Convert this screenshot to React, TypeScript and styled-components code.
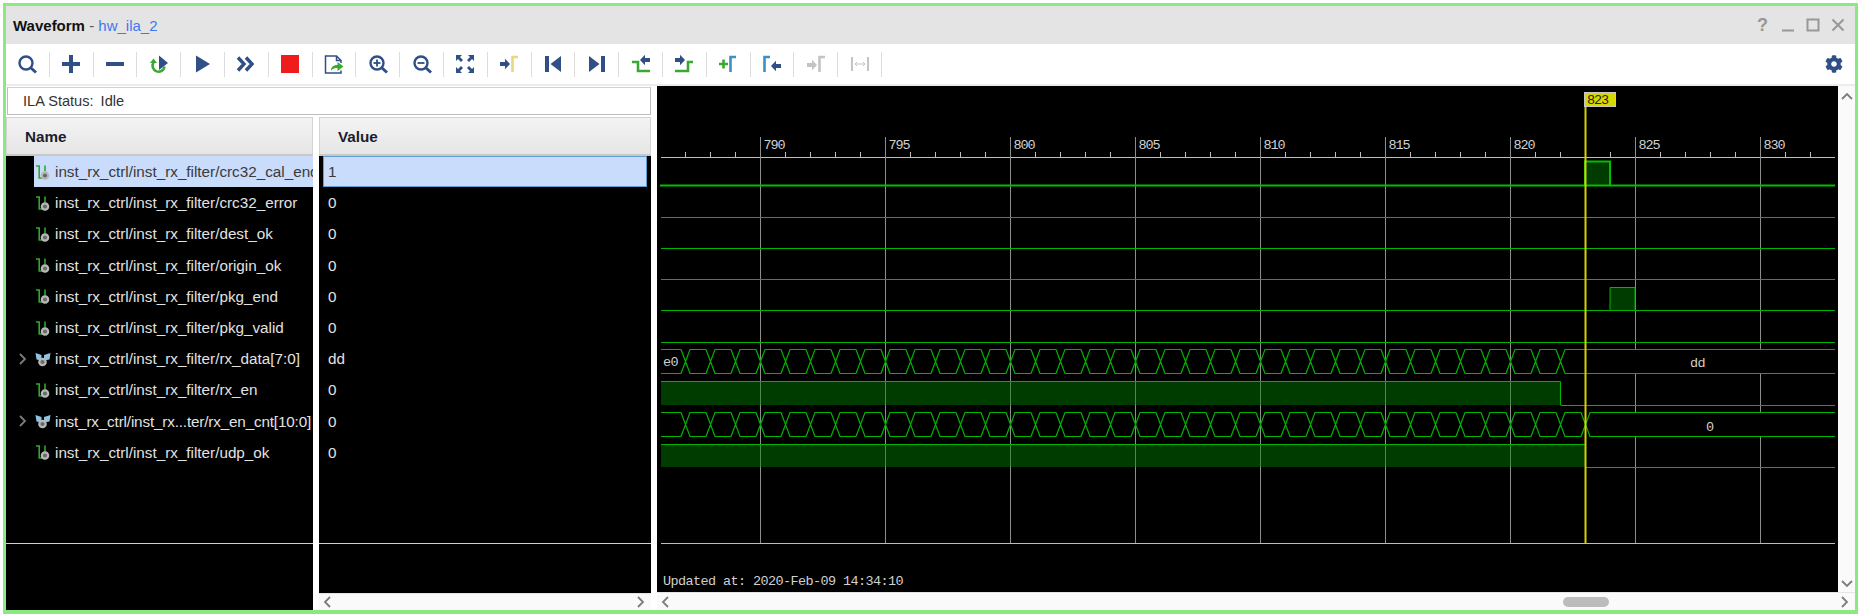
import React from "react";
import styled, { createGlobalStyle } from "styled-components";
import { FaCog } from "react-icons/fa";

const NAVY = "#2f4f86";
const GREEN = "#3aa835";
const GREY = "#c4c4c4";

const GlobalStyle = createGlobalStyle`
  html, body {
    margin: 0;
    padding: 0;
    background: #fff;
    overflow: hidden;
  }
  * {
    box-sizing: border-box;
  }
`;

// window shell
const Frame = styled.div`
  width: 1855px;
  height: 611px;
  margin: 3px 0 0 3px;
  display: flex;
  flex-direction: column;
  border: 3px solid #8ce982;
  border-bottom-width: 4px;
  background: #fff;
  font-family: "Liberation Sans", Arial, sans-serif;
  font-size: 15.25px;
`;

const TitleBar = styled.div`
  height: 38px;
  flex: none;
  display: flex;
  align-items: center;
  justify-content: space-between;
  padding: 0 5px 0 7px;
  background: #e4e4e4;
`;

const Title = styled.div`
  font-size: 15px;
  color: #555;
`;

const TitleStrong = styled.span`
  font-weight: bold;
  color: #111;
`;

const TitleLink = styled.span`
  color: #3f78f0;
`;

const WindowButtons = styled.div`
  display: flex;
  align-items: center;
`;

const WindowButton = styled.div`
  width: 25px;
  height: 20px;
  display: flex;
  align-items: center;
  justify-content: center;
  color: #979797;
  font-size: 18px;
  font-weight: bold;
`;

const Toolbar = styled.div`
  height: 40px;
  flex: none;
  display: flex;
  align-items: center;
  padding-right: 12px;
  background: #fff;
`;

const ToolButton = styled.div`
  width: 43.8px;
  height: 25px;
  flex: none;
  display: flex;
  align-items: center;
  justify-content: center;
  border-right: 1px solid #dcdcdc;
`;

const Gear = styled.div`
  margin-left: auto;
  display: flex;
  color: ${NAVY};
`;

const Content = styled.div`
  flex: 1;
  min-height: 0;
  display: flex;
  gap: 6px;
  border-top: 2px solid #ececec;
`;

// left side: status and the two tables
const LeftPane = styled.div`
  width: 645px;
  flex: none;
  display: flex;
  flex-direction: column;
`;

const StatusBox = styled.div`
  height: 28px;
  flex: none;
  margin: 1px 0 2px 1px;
  padding-left: 15px;
  display: flex;
  align-items: center;
  gap: 7px;
  background: #fff;
  border: 1px solid #bdbdbd;
  border-top-color: #d0d0d0;
  color: #333;
  font-size: 14.6px;
`;

const Columns = styled.div`
  flex: 1;
  min-height: 0;
  display: flex;
  gap: 6px;
`;

const Column = styled.div<{ $width?: number }>`
  display: flex;
  flex-direction: column;
  flex: ${(p) => (p.$width ? "none" : "1")};
  width: ${(p) => (p.$width ? `${p.$width}px` : "auto")};
  min-width: 0;
`;

const HeaderCell = styled.div<{ $indent: number }>`
  height: 39px;
  flex: none;
  display: flex;
  align-items: center;
  padding-left: ${(p) => p.$indent}px;
  font-weight: bold;
  color: #1c1c2c;
  background: linear-gradient(#f3f3f3, #e6e6e6);
  border: 1px solid #d4d4d4;
  border-bottom: 2px solid #c8c8c8;
`;

const RowList = styled.div`
  height: 388px;
  flex: none;
  display: flex;
  flex-direction: column;
  background: #000;
  border-bottom: 1px solid #d0d0d0;
`;

const Footer = styled.div`
  flex: 1;
  background: #000;
`;

const Row = styled.div`
  height: 31.2px;
  flex: none;
  display: flex;
  align-items: stretch;
  min-width: 0;
`;

const Expander = styled.div`
  width: 28px;
  flex: none;
  display: flex;
  align-items: center;
  justify-content: flex-end;
  padding-right: 5px;
`;

const NameCell = styled.div<{ $selected?: boolean }>`
  flex: 1;
  min-width: 0;
  display: flex;
  align-items: center;
  gap: 4px;
  padding-left: 1px;
  overflow: hidden;
  white-space: nowrap;
  color: ${(p) => (p.$selected ? "#3a3a3a" : "#e2e2e2")};
  background: ${(p) => (p.$selected ? "#c9dcfb" : "transparent")};

  svg {
    flex: none;
  }
`;

const NameText = styled.span<{ $tight?: boolean }>`
  letter-spacing: ${(p) => (p.$tight ? "-0.16px" : "normal")};
`;

const ValueCell = styled.div<{ $selected?: boolean }>`
  flex: 1;
  margin: 0 4px;
  display: flex;
  align-items: center;
  padding-left: 4px;
  color: ${(p) => (p.$selected ? "#3a3a3a" : "#e2e2e2")};
  background: ${(p) => (p.$selected ? "#c9dcfb" : "transparent")};
  border: 1px solid ${(p) => (p.$selected ? "#5f9ccf" : "transparent")};
`;

// right side: waveform and scroll bars
const WavePane = styled.div`
  flex: 1;
  min-width: 0;
  display: flex;
  flex-direction: column;
`;

const WaveRow = styled.div`
  height: 506px;
  flex: none;
  display: flex;
`;

const WaveSvg = styled.svg`
  display: block;
  width: 1181px;
  height: 506px;
  flex: none;
  background: #000;
`;

const VScroll = styled.div`
  flex: 1;
  display: flex;
  flex-direction: column;
  align-items: center;
  justify-content: space-between;
  padding: 5px 0 3px;
  background: #fafafa;
`;

const HScroll = styled.div<{ $height: number }>`
  height: ${(p) => p.$height}px;
  flex: none;
  position: relative;
  display: flex;
  align-items: center;
  justify-content: space-between;
  padding: 0 4px;
  background: #fafafa;
  border-top: 1px solid #e4e4e4;
`;

const ScrollThumb = styled.div`
  position: absolute;
  left: 906px;
  top: 4px;
  width: 46px;
  height: 10px;
  border-radius: 5px;
  background: #bcbcbc;
`;

// icons, drawn around a centre at 0,0
const Ico = ({ children, size = 22 }: { children: React.ReactNode; size?: number }) => (
  <svg width={size} height={size} viewBox={`${-size / 2} ${-size / 2} ${size} ${size}`} fill="none">
    {children}
  </svg>
);

const Lens = ({ mark }: { mark?: "plus" | "minus" }) => (
  <Ico>
    <circle cx="-1" cy="-1" r="6.5" stroke={NAVY} strokeWidth="2.4" fill="#fff" />
    <path d="M4 4l5 4.5" stroke={NAVY} strokeWidth="3" />
    {mark && <path d="M-4.5 -1h7" stroke={NAVY} strokeWidth="1.8" />}
    {mark === "plus" && <path d="M-1 -4.5v7" stroke={NAVY} strokeWidth="1.8" />}
  </Ico>
);

const Bracket = ({ color, x = 0 }: { color: string; x?: number }) => (
  <path d={`M${x + 7} -7H${x + 1.5}V8`} stroke={color} strokeWidth="2.6" />
);

const Arrow = ({ x, y, color, dir }: { x: number; y: number; color: string; dir: 1 | -1 }) => (
  <path
    d={`M${x} ${y - 2}h${dir * 5}v-3.2l${dir * 5} 5.2l${-dir * 5} 5.2v-3.2h${-dir * 5}z`}
    fill={color}
  />
);

const icons: React.ReactNode[] = [
  <Lens key="search" />,
  <Ico key="add">
    <path d="M-9 0H9M0 -9V9" stroke={NAVY} strokeWidth="4" />
  </Ico>,
  <Ico key="remove">
    <path d="M-9 0H9" stroke={NAVY} strokeWidth="4" />
  </Ico>,
  <Ico key="retrigger">
    <path d="M0 -8.5L9 -1L0 6z" fill={NAVY} />
    <path d="M-5.5 -1.5a6 6 0 1 0 11 4" stroke={GREEN} strokeWidth="2.6" />
    <path d="M-9 -1L-5.5 -5.5L-2 -1z" fill={GREEN} />
  </Ico>,
  <Ico key="run">
    <path d="M-7 -8.5L7 0L-7 8.5z" fill={NAVY} />
  </Ico>,
  <Ico key="run-fast">
    <path d="M-8 -6.5L-2 0L-8 6.5M0 -6.5L6 0L0 6.5" stroke={NAVY} strokeWidth="3.4" />
  </Ico>,
  <Ico key="stop">
    <rect x="-9" y="-9" width="18" height="18" fill="#ee1c1c" />
  </Ico>,
  <Ico key="export">
    <path d="M7 -1V-3.5L2.5 -8H-8.5V9H7V6.5M2.5 -8V-3.5H7" stroke={NAVY} strokeWidth="1.5" />
    <path d="M-3 6.5C-3 2.5 0 1 3.5 1V-2L9.5 2.5L3.5 7V4C1 4 -1 4.5 -3 6.5z" fill={GREEN} />
  </Ico>,
  <Lens key="zoom-in" mark="plus" />,
  <Lens key="zoom-out" mark="minus" />,
  <Ico key="fit">
    <path
      d="M-9 -9h6l-2 2l3 3l-2 2l-3 -3l-2 2zM9 -9v6l-2 -2l-3 3l-2 -2l3 -3l-2 -2zM-9 9v-6l2 2l3 -3l2 2l-3 3l2 2zM9 9h-6l2 -2l-3 -3l2 -2l3 3l2 -2z"
      fill={NAVY}
    />
  </Ico>,
  <Ico key="marker">
    <Arrow x={-9} y={0} color={NAVY} dir={1} />
    <Bracket color="#e8d880" x={2} />
  </Ico>,
  <Ico key="prev">
    <rect x="-8" y="-8" width="4" height="16" fill={NAVY} />
    <path d="M8 -8L-2.5 0L8 8z" fill={NAVY} />
  </Ico>,
  <Ico key="next">
    <rect x="4" y="-8" width="4" height="16" fill={NAVY} />
    <path d="M-8 -8L2.5 0L-8 8z" fill={NAVY} />
  </Ico>,
  <Ico key="edge-prev">
    <path d="M-9 -2H-3V7H9" stroke={GREEN} strokeWidth="2.6" />
    <Arrow x={9} y={-4} color={NAVY} dir={-1} />
  </Ico>,
  <Ico key="edge-next">
    <Arrow x={-9} y={-4} color={NAVY} dir={1} />
    <path d="M-9 7H4V-2H9" stroke={GREEN} strokeWidth="2.6" />
  </Ico>,
  <Ico key="add-marker">
    <path d="M-9 0H0M-4.5 -4.5V4.5" stroke={GREEN} strokeWidth="2.6" />
    <Bracket color="#3d8fc4" x={1} />
  </Ico>,
  <Ico key="goto-marker">
    <Bracket color="#3d8fc4" x={-9} />
    <Arrow x={9} y={2} color={NAVY} dir={-1} />
  </Ico>,
  <Ico key="marker-off">
    <Arrow x={-9} y={1} color={GREY} dir={1} />
    <Bracket color={GREY} x={2} />
  </Ico>,
  <Ico key="measure">
    <path d="M-8 -7V7M8 -7V7" stroke={GREY} strokeWidth="2" />
    <path d="M-5 0H5M-3 -2L-5 0L-3 2M3 -2L5 0L3 2" stroke={GREY} strokeWidth="1" />
  </Ico>,
];

const Chevron = ({ dir }: { dir: "left" | "right" | "up" | "down" }) => {
  const d = {
    left: "M7 1L2 6L7 11",
    right: "M3 1L8 6L3 11",
    up: "M1 8L6 3L11 8",
    down: "M1 4L6 9L11 4",
  }[dir];
  return (
    <svg width="12" height="12" viewBox="0 0 12 12" fill="none">
      <path d={d} stroke="#7c7c7c" strokeWidth="1.8" />
    </svg>
  );
};

const BitIcon = () => (
  <svg width="16" height="18" viewBox="0 0 16 18" fill="none">
    <path d="M1 3H4.2V15H8M10 2.5V8.5" stroke="#2fa82f" strokeWidth="1.6" />
    <circle cx="10" cy="12.5" r="3.2" stroke="#b8b8b8" strokeWidth="2.2" fill="#6a6a6a" />
  </svg>
);

const BusIcon = () => (
  <svg width="16" height="18" viewBox="0 0 16 18" fill="none">
    <path d="M0.5 3L6.5 5V10.5L1.5 9.5zM15.5 3L9 5V10.5L14.5 9.5z" fill="#8fc3e4" />
    <circle cx="7.5" cy="12" r="3.2" stroke="#b8b8b8" strokeWidth="2.2" fill="#6a6a6a" />
  </svg>
);

// table data
const signals = [
  { name: "inst_rx_ctrl/inst_rx_filter/crc32_cal_end", value: "1" },
  { name: "inst_rx_ctrl/inst_rx_filter/crc32_error", value: "0" },
  { name: "inst_rx_ctrl/inst_rx_filter/dest_ok", value: "0" },
  { name: "inst_rx_ctrl/inst_rx_filter/origin_ok", value: "0" },
  { name: "inst_rx_ctrl/inst_rx_filter/pkg_end", value: "0" },
  { name: "inst_rx_ctrl/inst_rx_filter/pkg_valid", value: "0" },
  { name: "inst_rx_ctrl/inst_rx_filter/rx_data[7:0]", value: "dd", bus: true },
  { name: "inst_rx_ctrl/inst_rx_filter/rx_en", value: "0" },
  { name: "inst_rx_ctrl/inst_rx...ter/rx_en_cnt[10:0]", value: "0", bus: true, tight: true },
  { name: "inst_rx_ctrl/inst_rx_filter/udp_ok", value: "0" },
];

// waveform geometry, in page pixels (the svg viewBox starts at the pane corner)
const X0 = 661;
const X1 = 1835;
const CURSOR = 1585.5;
const WAVE = "#00b400";
const FILL = "rgba(0, 128, 0, 0.46)";

const seq = (from: number, to: number, step: number) => {
  const out: number[] = [];
  for (let v = from; v <= to; v += step) out.push(v);
  return out;
};

const majors = seq(760.5, 1760.5, 125);
const minors = seq(685.5, 1810.5, 25).filter((x) => !majors.includes(x));

const Label = styled.text`
  font-family: "Liberation Mono", "DejaVu Sans Mono", monospace;
  font-size: 13.5px;
  letter-spacing: -0.6px;
  fill: #d0d0d0;
`;

const RulerLabel = styled(Label)`
  letter-spacing: -1.1px;
`;

const CursorLabel = styled(RulerLabel)`
  fill: #222;
`;

const Pulse = ({ low, high, from, to, color = WAVE, width = 1, rise = false }: {
  low: number;
  high: number;
  from: number;
  to: number;
  color?: string;
  width?: number;
  rise?: boolean;
}) => (
  <g>
    <rect x={from} y={high} width={to - from} height={low - high} fill={FILL} />
    <path
      d={`M${from} ${rise ? low : high + 0.5}V${high + 0.5}H${to}V${low}`}
      stroke={color}
      strokeWidth={width}
      fill="none"
    />
  </g>
);

const Bus = ({ high, low, last }: { high: number; low: number; last: number }) => {
  const mid = (high + low) / 2;
  const s = 4.5;
  const crossings = seq(685.5, last, 25);
  const hex = crossings.slice(0, -1).map((c, i) => {
    const n = crossings[i + 1];
    return `${c},${mid} ${c + s},${high} ${n - s},${high} ${n},${mid} ${n - s},${low} ${c + s},${low}`;
  });
  const h = high + 0.5;
  const l = low + 0.5;
  const edges = crossings
    .map((c, i) => {
      const n = crossings[i + 1] ?? X1 + s;
      return `M${c - s} ${h}L${c + s} ${l}H${n - s}M${c - s} ${l}L${c + s} ${h}H${n - s}`;
    })
    .join("");
  return (
    <g>
      <rect x={last} y={high} width={X1 - last} height={low - high} fill="#000" />
      <rect x={X0} y={high} width={crossings[0] - X0} height={low - high} fill="#000" />
      {hex.map((pts) => (
        <polygon key={pts} points={pts} fill="#000" />
      ))}
      <path
        d={`M${X0} ${h}H${crossings[0] - s}M${X0} ${l}H${crossings[0] - s}${edges}`}
        stroke={WAVE}
        strokeWidth="1.2"
        fill="none"
      />
    </g>
  );
};

const Waveform = () => (
  <WaveSvg viewBox="657 86 1181 506">
    {/* ruler and grid */}
    <path d={`M${X0} 157.5H${X1}`} stroke="#bdbdbd" />
    {minors.map((x) => (
      <path key={x} d={`M${x} 152V157`} stroke="#bdbdbd" />
    ))}
    {majors.map((x, i) => (
      <g key={x}>
        <path d={`M${x} 137V543`} stroke="#8e8e8e" />
        <RulerLabel x={x + 3} y={149}>
          {790 + i * 5}
        </RulerLabel>
      </g>
    ))}
    <path d={`M${X0} 543.5H${X1}`} stroke="#bdbdbd" />

    {/* single bit rows: a low line, plus a pulse where the signal is high */}
    <Pulse low={185} high={161} from={1585} to={1610} color="#00c000" width={2} rise />
    <path d={`M${X0 - 1} 185.5H${X1}`} stroke="#00c000" strokeWidth="2" />
    {[217.5, 248.5, 279.5, 342.5].map((y) => (
      <path key={y} d={`M${X0} ${y}H${X1}`} stroke={WAVE} />
    ))}
    <Pulse low={310} high={287} from={1610} to={1635} rise />
    <path d={`M${X0} 310.5H${X1}`} stroke={WAVE} />

    <Bus high={349} low={373} last={1560.5} />
    <Pulse low={405} high={381} from={X0} to={1560.5} />
    <path d={`M1560.5 405.5H${X1}`} stroke={WAVE} />

    <Bus high={412} low={436} last={1585.5} />
    <Pulse low={467} high={444} from={X0} to={1585.5} />
    <path d={`M1585.5 467.5H${X1}`} stroke={WAVE} />

    <Label x={663} y={366}>e0</Label>
    <Label x={1690} y={367}>dd</Label>
    <Label x={1706} y={431}>0</Label>

    {/* cursor */}
    <path d={`M${CURSOR} 105V543`} stroke="#d8d000" strokeWidth="2" />
    <rect x="1584.5" y="92.5" width="31" height="14" fill="#d8d800" stroke="#c8c8c8" />
    <CursorLabel x={1587} y={104}>823</CursorLabel>

    <Label x={663} y={585}>Updated at: 2020-Feb-09 14:34:10</Label>
  </WaveSvg>
);

export default function App() {
  return (
    <>
      <GlobalStyle />
      <Frame>
        <TitleBar>
          <Title>
            <TitleStrong>Waveform</TitleStrong> - <TitleLink>hw_ila_2</TitleLink>
          </Title>
          <WindowButtons>
            <WindowButton>?</WindowButton>
            <WindowButton>
              <svg width="14" height="14" viewBox="0 0 14 14">
                <path d="M1 12.5H13" stroke="#979797" strokeWidth="2" />
              </svg>
            </WindowButton>
            <WindowButton>
              <svg width="14" height="14" viewBox="0 0 14 14" fill="none">
                <rect x="1.5" y="1.5" width="11" height="11" stroke="#979797" strokeWidth="2" />
              </svg>
            </WindowButton>
            <WindowButton>
              <svg width="14" height="14" viewBox="0 0 14 14" fill="none">
                <path d="M1.5 1.5L12.5 12.5M12.5 1.5L1.5 12.5" stroke="#979797" strokeWidth="2" />
              </svg>
            </WindowButton>
          </WindowButtons>
        </TitleBar>

        <Toolbar>
          {icons.map((icon, i) => (
            <ToolButton key={i}>{icon}</ToolButton>
          ))}
          <Gear>
            <FaCog size={18} />
          </Gear>
        </Toolbar>

        <Content>
          <LeftPane>
            <StatusBox>
              <span>ILA Status:</span>
              <span>Idle</span>
            </StatusBox>
            <Columns>
              <Column $width={307}>
                <HeaderCell $indent={18}>Name</HeaderCell>
                <RowList>
                  {signals.map((s, i) => (
                    <Row key={s.name}>
                      <Expander>{s.bus && <Chevron dir="right" />}</Expander>
                      <NameCell $selected={i === 0}>
                        {s.bus ? <BusIcon /> : <BitIcon />}
                        <NameText $tight={s.tight}>{s.name}</NameText>
                      </NameCell>
                    </Row>
                  ))}
                </RowList>
                <Footer />
              </Column>
              <Column>
                <HeaderCell $indent={18}>Value</HeaderCell>
                <RowList>
                  {signals.map((s, i) => (
                    <Row key={s.name}>
                      <ValueCell $selected={i === 0}>{s.value}</ValueCell>
                    </Row>
                  ))}
                </RowList>
                <Footer />
                <HScroll $height={17}>
                  <Chevron dir="left" />
                  <Chevron dir="right" />
                </HScroll>
              </Column>
            </Columns>
          </LeftPane>

          <WavePane>
            <WaveRow>
              <Waveform />
              <VScroll>
                <Chevron dir="up" />
                <Chevron dir="down" />
              </VScroll>
            </WaveRow>
            <HScroll $height={18}>
              <Chevron dir="left" />
              <ScrollThumb />
              <Chevron dir="right" />
            </HScroll>
          </WavePane>
        </Content>
      </Frame>
    </>
  );
}
